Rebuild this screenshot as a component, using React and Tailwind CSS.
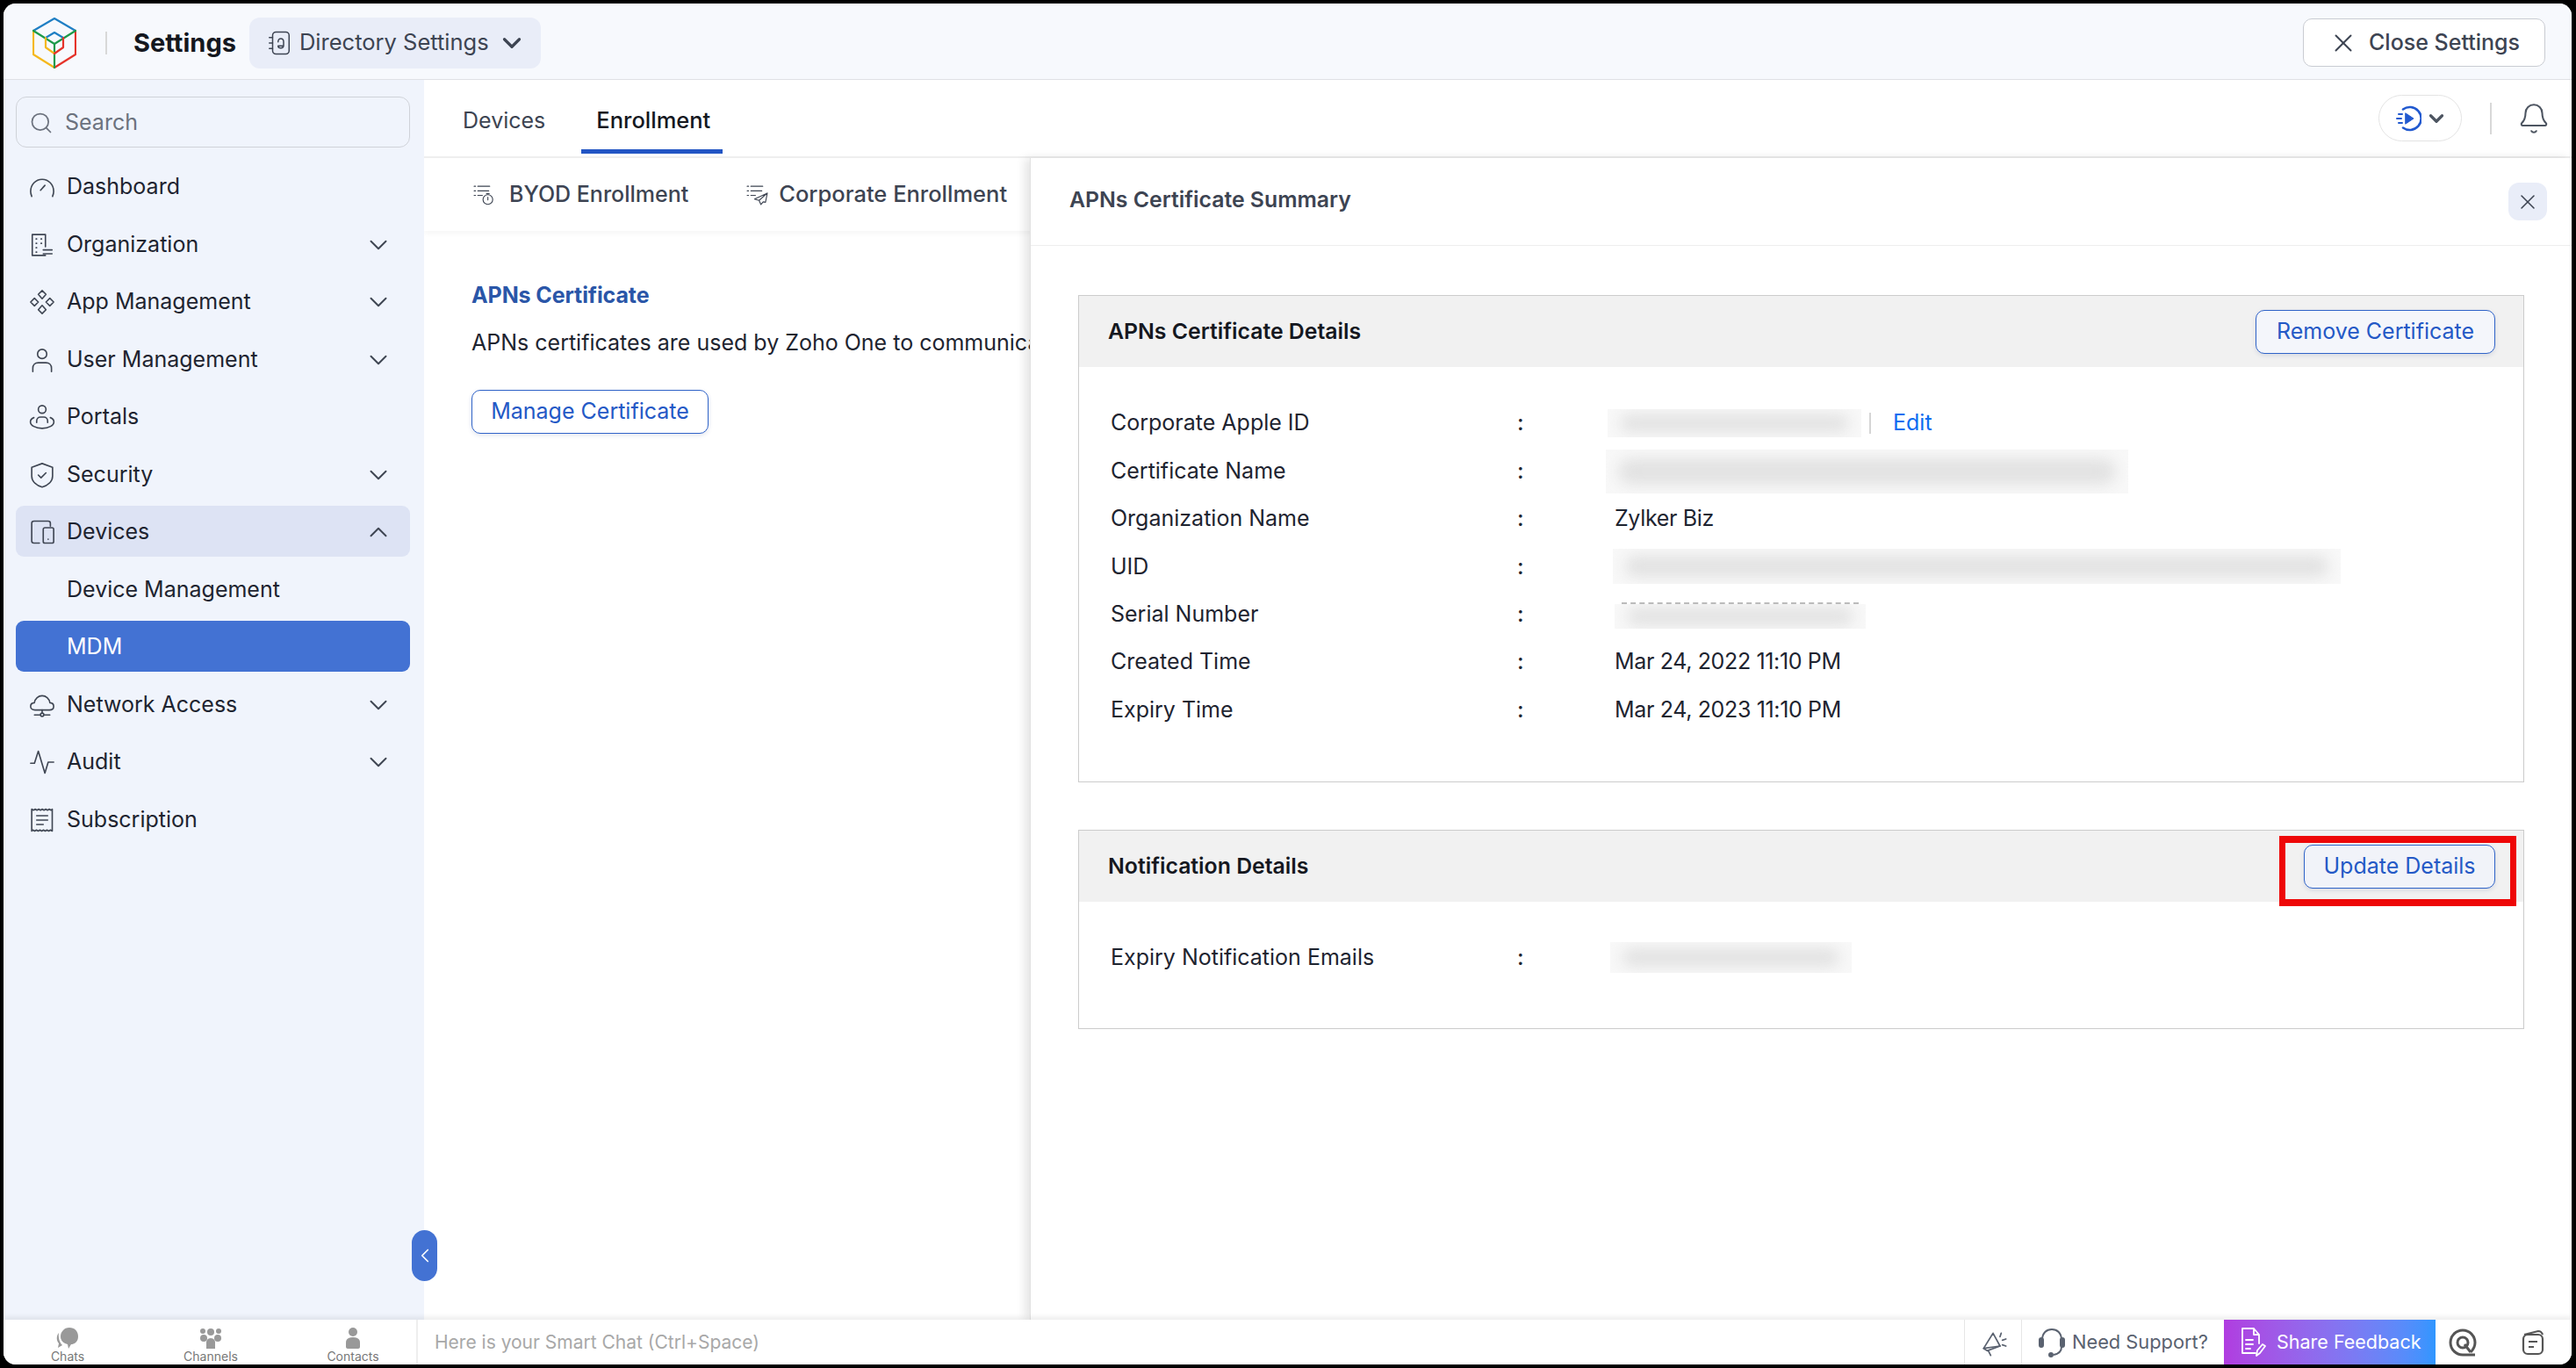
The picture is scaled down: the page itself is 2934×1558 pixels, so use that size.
import React from "react";
import { ChevronDown, ChevronUp, ChevronLeft, X, Search, Bell } from "lucide-react";

const S = ({ size = 30, vb = 24, sw = 1.3, children, className = "" }) => (
  <svg width={size} height={size} viewBox={`0 0 ${vb} ${vb}`} fill="none" stroke="currentColor" strokeWidth={sw} strokeLinecap="round" strokeLinejoin="round" className={`shrink-0 ${className}`}>{children}</svg>
);

const Icons = {
  dashboard: <S><path d="M2.500 20.500C2 19.200 1.500 17.800 1.500 16c0-6 4.500-11 10.500-11s10.500 5 10.500 11c0 1.800-.5 3.200-1 4.500" /><path d="M10.500 15l4-4.500" /></S>,
  org: <S><path d="M15 21.500H3V2.500h12v11" /><path d="M6.500 6.500h.5M11 6.500h.5M6.500 10.500h.5M11 10.500h.5M6.500 14.500h.5M6.500 18.500h.5" /><path d="M13 16.500h8M13 20h8" /></S>,
  app: <S><path d="M12 1.500l3.500 3.500L12 9 8.500 5zM12 15l3.500 4L12 22.500 8.500 19zM5 8.500L8.500 12 5 15.500 1.500 12zM19 8.500l3.500 3.500-3.500 3.500-3.500-3.500z" /></S>,
  user: <S><circle cx="12" cy="6.500" r="4.200" /><path d="M3.500 22.500v-3c0-3 2-5 5-5h7c3 0 5 2 5 5v3" /></S>,
  portals: <S><circle cx="12" cy="5" r="3.500" /><path d="M7 17v-1.500c0-2 1.500-3.500 3.500-3.500h3c2 0 3.500 1.500 3.500 3.500V17" /><path d="M4.500 12.500c-2.200.8-3.200 2.200-3.200 3.800 0 3.200 4.700 6 10.700 6s10.700-2.800 10.700-6c0-1.600-1-3-3.200-3.800" /></S>,
  security: <S><path d="M12 1.500l9.500 3.500v8c0 5-4.500 8.500-9.500 10-5-1.500-9.500-5-9.500-10V5z" /><path d="M8.500 12l2.500 2.500 4.500-4.500" /></S>,
  devices: <S><path d="M9.500 22H4.500c-1.200 0-2-.8-2-2V4c0-1.200.8-2 2-2h13c1.200 0 2 .8 2 2v2.500" /><rect x="13" y="8" width="9.500" height="14" rx="1.500" /><path d="M17.500 18.500h.01" /></S>,
  network: <S><path d="M7 16.500H5.500C3 16.500 1.500 15 1.500 13.200s1.400-3.200 3.400-3.300C5.500 6 8.500 3.500 12 3.500s6.500 2.500 7.100 6.400c2 .1 3.400 1.500 3.400 3.300s-1.500 3.300-4 3.300z" /><path d="M12 16.500v3M5 21h5M14 21h5" /><circle cx="12" cy="20.800" r="1.500" /></S>,
  audit: <S><path d="M1.500 13H5L8.500 2l6 20 3-10h5" /></S>,
  sub: <S><path d="M2.500 2l1.600 1 1.600-1 1.600 1 1.600-1 1.600 1 1.600-1 1.600 1 1.600-1 1.600 1 1.600-1 1.600 1 1.100-1v20l-1.600-1-1.600 1-1.600-1-1.600 1-1.600-1-1.600 1-1.600-1-1.600 1-1.600-1-1.600 1-1.600-1-1.100 1z" /><path d="M7 8h10M7 12h10M7 16h6" /></S>,
};

const nav = [
  { t: "Dashboard", i: "dashboard" },
  { t: "Organization", i: "org", c: 1 },
  { t: "App Management", i: "app", c: 1 },
  { t: "User Management", i: "user", c: 1 },
  { t: "Portals", i: "portals" },
  { t: "Security", i: "security", c: 1 },
  { t: "Devices", i: "devices", up: 1 },
  { t: "Device Management" },
  { t: "MDM", active: 1 },
  { t: "Network Access", i: "network", c: 1 },
  { t: "Audit", i: "audit", c: 1 },
  { t: "Subscription", i: "sub" },
];

const Logo = () => (
  <svg width="50" height="58" viewBox="0 0 50 58" fill="none" strokeWidth="2.200" strokeLinejoin="round" strokeLinecap="round">
    <path d="M1 15L25 1l24 14" stroke="#1f7fc4" />
    <path d="M1 15v27l24 15" stroke="#f5b81c" />
    <path d="M49 15v27L25 57" stroke="#e5332a" />
    <path d="M1 15l24 15 24-15M25 30v27" stroke="#1c9a4a" />
    <path d="M15 23l10-6 10 6" stroke="#1f7fc4" />
    <path d="M15 23v11l10 7" stroke="#f5b81c" />
    <path d="M35 23v11l-10 7" stroke="#e5332a" />
  </svg>
);

const Blur = ({ className }) => (
  <div className={`overflow-hidden bg-[#f8f8f8] ${className}`}>
    <div className="w-full h-full flex items-center px-[14px]">
      <div className="h-[60%] min-h-[20px] w-full bg-[#e2e2e2] blur-[8px] rounded-full" />
    </div>
  </div>
);

const rows = [
  ["Corporate Apple ID", "a"],
  ["Certificate Name", "b"],
  ["Organization Name", "Zylker Biz"],
  ["UID", "c"],
  ["Serial Number", "d"],
  ["Created Time", "Mar 24, 2022 11:10 PM"],
  ["Expiry Time", "Mar 24, 2023 11:10 PM"],
];

const Val = ({ v }) => {
  if (v === "a")
    return (
      <div className="flex items-center">
        <Blur className="w-[289px] h-[32px] -ml-[8px]" />
        <div className="w-[2px] h-[24px] bg-[#d5d5d5] ml-[9px]" />
        <span className="ml-[25px] text-[#0b6cf0]">Edit</span>
      </div>
    );
  if (v === "b") return <Blur className="w-[595px] h-[50px] -ml-[10px]" />;
  if (v === "c") return <Blur className="w-[829px] h-[40px] -ml-[2px]" />;
  if (v === "d")
    return (
      <div className="mt-[2px] w-[286px]">
        <div className="h-[2px] mx-[8px] border-t-2 border-dashed border-[#bbbbbb]" />
        <Blur className="w-[286px] h-[28px]" />
      </div>
    );
  return <span className="tracking-[-0.35px]">{v}</span>;
};

const Btn = ({ children, className = "" }) => (
  <button className={`h-[50px] rounded-[10px] border-[1.500px] border-[#2f63c8] text-[#2459c6] text-[25px] flex items-center justify-center shadow-[0_2px_5px_rgba(60,80,140,0.15)] ${className}`}>{children}</button>
);

export default function App() {
  return (
    <div className="w-[2934px] h-[1558px] bg-black pt-[4px] pl-[4px] pr-[5px] pb-[4px] overflow-hidden text-[#1e2430] text-[25px]" style={{ fontFamily: "Inter, 'Noto Sans', sans-serif" }}>
      <div className="w-full h-full rounded-[14px] overflow-hidden bg-white flex flex-col">
        {/* header */}
        <header className="h-[87px] shrink-0 bg-[#f7f9fd] border-b border-[#dfe1e5] flex items-center pt-[3px] pl-[33px] pr-[30px]">
          <Logo />
          <div className="w-[2px] h-[26px] bg-[#d8d8d8] ml-[33px]" />
          <span className="ml-[30px] text-[29px] font-bold text-[#15181f]">Settings</span>
          <div className="ml-[15px] w-[332px] h-[58px] rounded-[12px] bg-[#e9edf8] flex items-center pl-[19px] text-[#3d4452] text-[25.500px]">
            <S size={30} sw={1.2}><rect x="6" y="2" width="15" height="20" rx="3" /><path d="M3 7h3M3 12h3M3 17h3" /><path d="M11 11c0-2 1-3 2.500-3S16 9 16 11v3c0 1.500-1 2.500-2.500 2.500S11 15.500 11 14.500h5" /></S>
            <span className="ml-[8px]">Directory Settings</span>
            <ChevronDown size={34} strokeWidth={2.3} className="ml-[9px]" />
          </div>
          <button className="ml-auto w-[276px] h-[55px] rounded-[10px] border border-[#c9ccd2] bg-white flex items-center justify-center text-[#3d4452] text-[25px] font-medium">
            <X size={34} strokeWidth={1.4} className="mr-[12px]" />
            Close Settings
          </button>
        </header>

        <div className="flex-1 flex min-h-0 relative">
          {/* sidebar */}
          <aside className="w-[479px] shrink-0 bg-[#f0f4fc] pl-[14px] pr-[16px] pt-[19px] relative">
            <div className="h-[58px] rounded-[12px] border border-[#cfd2d8] flex items-center pt-[2px] pl-[14px] text-[#6c727e]">
              <Search size={28} strokeWidth={1.5} />
              <span className="ml-[13px]">Search</span>
            </div>
            <nav className="mt-[15px] flex flex-col gap-[7.500px]">
              {nav.map((n) => (
                <div key={n.t} className={`h-[58px] rounded-[9px] flex items-center pt-[2px] pl-[16px] pr-[19px] ${n.active ? "bg-[#4372d3] text-white" : n.up ? "bg-[#dde3f4]" : ""}`}>
                  <span className="w-[28px] h-[30px] flex items-center justify-center text-[#3f4653]">{n.i ? Icons[n.i] : null}</span>
                  <span className="ml-[14px]">{n.t}</span>
                  {n.c ? <ChevronDown size={34} strokeWidth={1.4} className="ml-auto text-[#3f4653]" /> : null}
                  {n.up ? <ChevronUp size={34} strokeWidth={1.4} className="ml-auto text-[#3f4653]" /> : null}
                </div>
              ))}
            </nav>
            <div className="absolute left-[465px] top-[1310px] w-[29px] h-[58px] rounded-full bg-[#4372d3] z-20 flex items-center justify-center text-white">
              <ChevronLeft size={26} strokeWidth={1.6} />
            </div>
          </aside>

          {/* content */}
          <main className="flex-1 min-w-0 flex flex-col">
            <div className="h-[89px] shrink-0 border-b-2 border-[#eeeeee] flex items-center pl-[44px] pr-[24px] relative">
              <span className="text-[#3d4452] pt-[6px]">Devices</span>
              <span className="ml-[58px] font-medium text-[#15181f] pt-[6px] text-[25.500px]">Enrollment</span>
              <div className="absolute left-[179px] bottom-[3px] w-[161px] h-[5px] bg-[#2255c4]" />
              <div className="ml-auto w-[95px] h-[53px] rounded-full border border-[#e3e3e3] flex items-center pl-[18px] mr-[32px]">
                <svg width="30" height="30" viewBox="0 0 30 30" fill="none" stroke="#2159cf" strokeWidth="2.600" strokeLinecap="round"><path d="M9 4.500A13 13 0 1 1 9 25.500" /><path d="M12 9l9 6-9 6z" fill="#2159cf" strokeWidth="1" /><path d="M4 10h4M2 15h5M4 20h4" strokeWidth="2" /></svg>
                <ChevronDown size={26} strokeWidth={3} className="ml-[4px] text-[#4d5561]" />
              </div>
              <div className="w-[2px] h-[36px] bg-[#d8d8d8] mr-[29px]" />
              <Bell size={38} strokeWidth={1.3} className="text-[#4d5561]" />
            </div>
            <div className="h-[83px] shrink-0 flex items-center pl-[56px] shadow-[0_3px_6px_rgba(0,0,0,0.04)] text-[#3d4452] font-medium">
              <S size={25} sw={1.1}><path d="M1 3h1.500M5 3h13M1 8h1.500M5 8h12M1 13h1.500M5 13h5" /><circle cx="16" cy="17.500" r="5.300" /><path d="M16 15v3M14.500 11.200h3" /></S>
              <span className="ml-[16px]">BYOD Enrollment</span>
              <span className="ml-[66px]"><S size={25} sw={1.1}><path d="M1 3h1.500M5 3h13M1 8h1.500M5 8h12M1 13h1.500M5 13h5" /><path d="M23 10.500L9 17l5 1.500 2 4.500 2.500-3 2.500.5zM14 18.500L23 10.500" /></S></span>
              <span className="ml-[12px] text-[25.500px]">Corporate Enrollment</span>
            </div>
            <div className="pl-[54px] pt-[58px]">
              <h2 className="font-bold text-[#2a56a8] leading-[30px] tracking-[-0.1px]">APNs Certificate</h2>
              <p className="mt-[24px] leading-[30px] whitespace-nowrap">APNs certificates are used by Zoho One to communicate</p>
              <Btn className="mt-[39px] w-[270px] bg-white">Manage Certificate</Btn>
            </div>
          </main>

          {/* summary panel */}
          <section className="absolute left-[1169px] top-[89px] right-0 bottom-0 bg-white border-l border-[#e2e2e2] shadow-[-6px_0_10px_rgba(0,0,0,0.1)] z-10 flex flex-col">
            <div className="h-[100px] shrink-0 border-b border-[#eeeeee] flex items-center pb-[3px] pl-[44px] pr-[28px]">
              <span className="font-semibold text-[#3d4452] text-[24.800px]">APNs Certificate Summary</span>
              <div className="ml-auto w-[44px] h-[43px] mt-[3px] rounded-[12px] bg-[#e9edf8] flex items-center justify-center text-[#3d4452]">
                <X size={28} strokeWidth={1.3} />
              </div>
            </div>
            <div className="pl-[54px] pr-[54px] pt-[56px] flex flex-col gap-[54px]">
              <div className="h-[555px] border-[1.500px] border-[#cccccc]">
                <div className="h-[81px] bg-[#f1f1f1] flex items-center justify-between pl-[33px] pr-[32px]">
                  <span className="font-semibold text-[#15181f] text-[24.800px]">APNs Certificate Details</span>
                  <Btn className="w-[273px] bg-[#f4f6fb]">Remove Certificate</Btn>
                </div>
                <div className="pt-[37px] flex flex-col">
                  {rows.map(([l, v]) => (
                    <div key={l} className="h-[54.400px] flex items-center pl-[36px]">
                      <span className="w-[463px] shrink-0">{l}</span>
                      <span className="w-[111px] shrink-0 font-medium">:</span>
                      <Val v={v} />
                    </div>
                  ))}
                </div>
              </div>
              <div className="h-[227px] border-[1.500px] border-[#cccccc] relative">
                <div className="h-[81px] bg-[#f1f1f1] flex items-center justify-between pl-[33px] pr-[32px]">
                  <span className="font-semibold text-[#15181f] text-[24.800px]">Notification Details</span>
                  <Btn className="w-[218px] bg-[#f1f3f9]">Update Details</Btn>
                </div>
                <div className="pt-[27px] flex items-center pl-[36px] h-[100px]">
                  <span className="w-[463px] shrink-0">Expiry Notification Emails</span>
                  <span className="w-[106px] shrink-0 font-medium">:</span>
                  <Blur className="w-[275px] h-[35px]" />
                </div>
                <div className="absolute right-[8px] top-[6px] w-[270px] h-[80px] border-x-[7.500px] border-y-[8px] border-[#ee0707]" />
              </div>
            </div>
          </section>
        </div>

        {/* footer */}
        <footer className="h-[51px] shrink-0 bg-white flex items-stretch shadow-[0_-3px_6px_rgba(0,0,0,0.08)] z-30 text-[#9a9a9a]">
          <div className="w-[472px] shrink-0 border-r-2 border-[#eeeeee] flex text-[14px] text-[#777]">
            {[
              ["Chats", <svg key="a" width="28" height="24" viewBox="0 0 28 24" fill="#999"><path d="M16 0c6 0 10 4 10 10s-4 9-8 9l-3 5-1-5C9 18 6 15 6 10S10 0 16 0z" /><path d="M4 6C1 9 1 15 4 18l-1 5 5-3C5 17 3 12 4 6z" /></svg>, 146],
              ["Channels", <svg key="b" width="28" height="24" viewBox="0 0 28 24" fill="#999"><circle cx="14" cy="5" r="4" /><circle cx="5" cy="4" r="3" /><circle cx="23" cy="4" r="3" /><circle cx="6" cy="12" r="4" /><circle cx="22" cy="12" r="4" /><path d="M9 24v-7c0-3 2-5 5-5s5 2 5 5v7z" /></svg>, 180],
              ["Contacts", <svg key="c" width="28" height="24" viewBox="0 0 28 24" fill="#999"><circle cx="14" cy="5" r="5" /><path d="M8 24c-1 0-2-1-2-2v-5c0-4 3-6 8-6s8 2 8 6v5c0 1-1 2-2 2z" /></svg>, 144],
            ].map(([t, ic, w]) => (
              <div key={t} style={{ width: w }} className="flex flex-col items-center pt-[9px] leading-[16px] gap-[1px]">
                {ic}
                <span>{t}</span>
              </div>
            ))}
          </div>
          <div className="flex items-center pl-[19px] text-[21px] text-[#a8a8a8]">Here is your Smart Chat (Ctrl+Space)</div>
          <div className="ml-auto flex items-stretch text-[#5a6270]">
            <div className="w-[66px] border-x border-[#e6e6e6] flex items-center justify-center">
              <S size={32}><path d="M4 17l8-13 6 11z" /><path d="M4 17l3 2 11-4M8 19l2 4" /><path d="M19 4l-1 3M23 9l-3 1M23 15l-3-1" /></S>
            </div>
            <div className="w-[230px] flex items-center pl-[19px]">
              <svg width="30" height="34" viewBox="0 0 30 34" fill="none" stroke="currentColor" strokeWidth="2"><path d="M4 14C4 6 9 2 15 2s11 4 11 12v8c0 5-4 8-9 9" /><rect x="1" y="12" width="4" height="10" rx="2" fill="currentColor" /><rect x="25" y="12" width="4" height="10" rx="2" fill="currentColor" /><circle cx="14" cy="31" r="2" fill="currentColor" /></svg>
              <span className="ml-[8px] text-[21.800px] whitespace-nowrap">Need Support?</span>
            </div>
            <div className="w-[241px] flex items-center pl-[18px] text-white bg-gradient-to-r from-[#b03ce0] to-[#2f96ff]">
              <svg width="30" height="36" viewBox="0 0 30 36" fill="none" stroke="white" strokeWidth="1.800" strokeLinejoin="round" strokeLinecap="round"><path d="M18 30H3V2h13l6 7v10M16 2v7h6" /><path d="M7 15h8M7 20h8M7 25h5" /><path d="M19 33l1-6 6-7 3 2-6 8z" /></svg>
              <span className="ml-[12px] text-[21.500px] whitespace-nowrap">Share Feedback</span>
            </div>
            <div className="w-[62px] flex items-center justify-center text-[#555]">
              <svg width="32" height="32" viewBox="0 0 32 32" fill="none" stroke="currentColor" strokeWidth="3"><path d="M30 30H16A14 14 0 1 1 30 16c0 5-2 8-5 11" /><circle cx="16" cy="16" r="6" /><path d="M18 18l7 9" /></svg>
            </div>
            <div className="w-[93px] flex items-center justify-start pl-[35px] text-[#555]">
              <svg width="28" height="30" viewBox="0 0 28 30" fill="none" stroke="currentColor" strokeWidth="2.200" strokeLinejoin="round"><rect x="3" y="6" width="22" height="22" rx="5" /><path d="M4 6l16-4c2 0 4 1 5 4" /><path d="M9 14h10M9 20h6" /></svg>
            </div>
          </div>
        </footer>
      </div>
    </div>
  );
}
